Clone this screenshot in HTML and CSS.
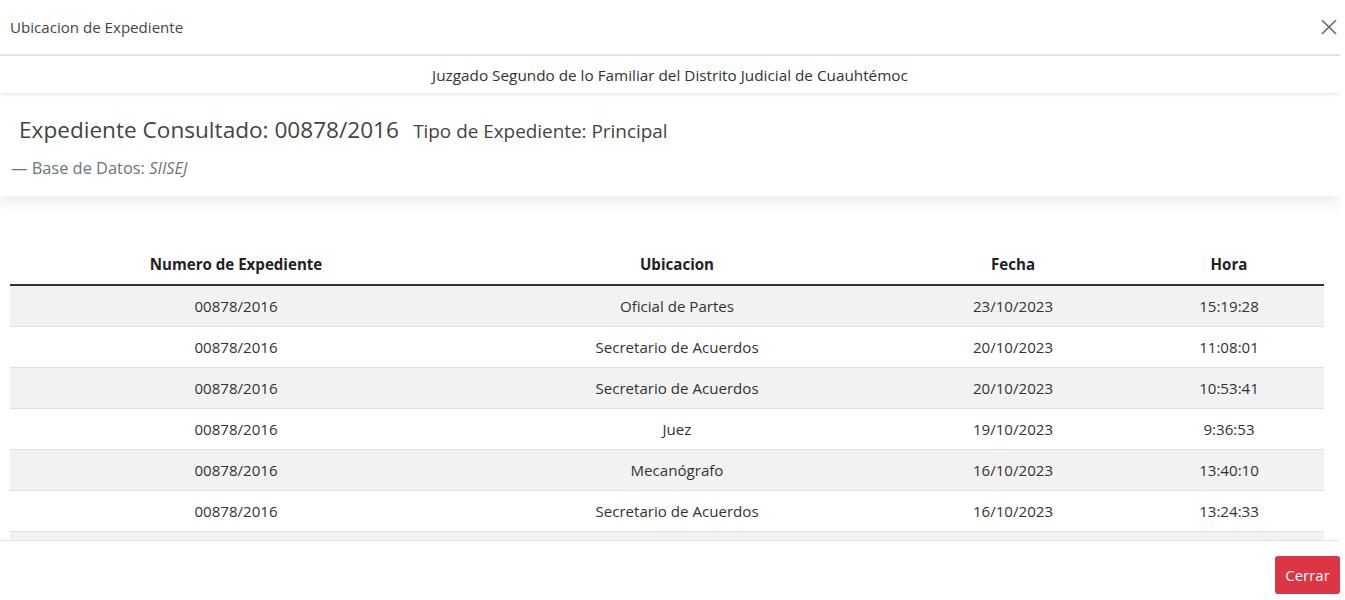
FILE: index.html
```html
<!DOCTYPE html>
<html lang="es">
<head>
    <meta charset="UTF-8">
    <meta name="viewport" content="width=device-width, initial-scale=1.0">
    <title>Ubicacion de Expediente</title>
    <link rel="stylesheet" href="styles.css">
</head>
<body>

    <div class="modal">
        <div class="modal-header">
            <h5 class="modal-title">Ubicacion de Expediente</h5>
            <button class="close" type="button">&times;</button>
        </div>

        <div class="modal-body">
            <div class="court-band">Juzgado Segundo de lo Familiar del Distrito Judicial de Cuauhtémoc</div>

            <div class="info-card">
                <div class="info-title">
                    <span class="expediente">Expediente Consultado: 00878/2016</span>
                    <span class="tipo">Tipo de Expediente: Principal</span>
                </div>
                <div class="info-footer">&mdash; Base de Datos: <cite>SIISEJ</cite></div>
            </div>

            <div class="table-wrap">
                <table class="location-table">
                    <thead>
                        <tr>
                            <th class="col-num">Numero de Expediente</th>
                            <th class="col-ubi">Ubicacion</th>
                            <th class="col-fecha">Fecha</th>
                            <th class="col-hora">Hora</th>
                        </tr>
                    </thead>
                    <tbody>
                        <tr>
                            <td>00878/2016</td>
                            <td>Oficial de Partes</td>
                            <td>23/10/2023</td>
                            <td>15:19:28</td>
                        </tr>
                        <tr>
                            <td>00878/2016</td>
                            <td>Secretario de Acuerdos</td>
                            <td>20/10/2023</td>
                            <td>11:08:01</td>
                        </tr>
                        <tr>
                            <td>00878/2016</td>
                            <td>Secretario de Acuerdos</td>
                            <td>20/10/2023</td>
                            <td>10:53:41</td>
                        </tr>
                        <tr>
                            <td>00878/2016</td>
                            <td>Juez</td>
                            <td>19/10/2023</td>
                            <td>9:36:53</td>
                        </tr>
                        <tr>
                            <td>00878/2016</td>
                            <td>Mecanógrafo</td>
                            <td>16/10/2023</td>
                            <td>13:40:10</td>
                        </tr>
                        <tr>
                            <td>00878/2016</td>
                            <td>Secretario de Acuerdos</td>
                            <td>16/10/2023</td>
                            <td>13:24:33</td>
                        </tr>
                        <tr class="row-more">
                            <td></td>
                            <td></td>
                            <td></td>
                            <td></td>
                        </tr>
                    </tbody>
                </table>
            </div>
        </div>

        <div class="modal-footer">
            <button class="btn-danger" type="button">Cerrar</button>
        </div>
    </div>

</body>
</html>
```

FILE: styles.css
```css
body {
    margin: 0;
    font-family: "Open Sans", Arial, sans-serif;
    background-color: #ffffff;
    color: #212529;
}
.modal {
    width: 1340px;
    height: 600px;
    background-color: #fff;
    display: flex;
    flex-direction: column;
    overflow: hidden;
}
.modal-header {
    height: 56px;
    box-sizing: border-box;
    display: flex;
    align-items: center;
    justify-content: space-between;
    padding: 0 0 0 10px;
    border-bottom: 2px solid #e2e2e2;
}
.modal-title {
    margin: 0;
    font-size: 15.1px;
    font-weight: normal;
    color: #444;
}
.close {
    border: none;
    background: none;
    padding: 0;
    margin: 0 -1px 2px 0;
    font-family: "DejaVu Sans", Arial, sans-serif;
    font-size: 29px;
    font-weight: 300;
    line-height: 1;
    color: #666;
    cursor: pointer;
}
.modal-body {
    height: 484px;
    overflow: hidden;
}
.court-band {
    height: 37px;
    display: flex;
    align-items: center;
    justify-content: center;
    font-size: 15.3px;
    color: #333;
    box-shadow: 0 2px 3px rgba(0, 0, 0, 0.07);
    position: relative;
}
.info-card {
    margin-top: 2px;
    height: 101px;
    box-sizing: border-box;
    padding: 19px 0 0 11px;
    box-shadow: 0 8px 14px rgba(0, 0, 0, 0.07);
    position: relative;
}
.info-title {
    padding-left: 8px;
    color: #444;
}
.expediente {
    font-size: 22.6px;
    margin-right: 10px;
}
.tipo {
    font-size: 18.9px;
}
.info-footer {
    margin-top: 11px;
    font-size: 16.4px;
    color: #6c757d;
}
.info-footer cite {
    font-style: italic;
}
.table-wrap {
    padding: 49px 16px 0 10px;
}
.location-table {
    width: 100%;
    table-layout: fixed;
    border-collapse: collapse;
    font-size: 15.1px;
    color: #333;
}
.location-table th {
    font-size: 15.1px;
    font-weight: bold;
    color: #222;
    padding: 9px 12px 10px;
    line-height: 20px;
    border-bottom: 2px solid #333;
    text-align: center;
}
.location-table td {
    padding: 10px 12px;
    text-align: center;
    border-bottom: 1px solid #dee2e6;
    line-height: 20px;
}
.location-table tbody tr:nth-child(odd) td {
    background-color: #f2f2f2;
}
.row-more td {
    height: 20px;
}
/* anchos sin el padding de 24px */
.col-num { width: 428px; }
.col-ubi { width: 406px; }
.col-fecha { width: 218px; }
.col-hora { width: 166px; }
.modal-footer {
    flex: 1;
    border-top: 1px solid #e5e5e5;
    display: flex;
    justify-content: flex-end;
    align-items: flex-start;
    padding-top: 15px;
}
.btn-danger {
    border: none;
    border-radius: 3px;
    background-color: #dc3545;
    color: #fff;
    font-family: "Open Sans", Arial, sans-serif;
    font-size: 15px;
    padding: 0 10px;
    height: 38px;
    width: 65px;
    cursor: pointer;
}
```
